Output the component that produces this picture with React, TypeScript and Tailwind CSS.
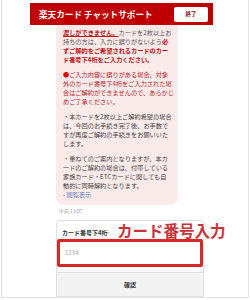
import React from "react";

const R = "text-[#c20d14]";

export default function App() {
  const font = { fontFamily: '"Noto Sans CJK JP", "Noto Sans", sans-serif' };
  return (
    <div className="w-[250px] h-[300px] bg-white relative overflow-hidden" style={font}>
      <div className="mx-[1px] h-[298px] border-x border-b border-[#e2e2e2] flex flex-col">
        <div className="pt-[3px] pl-[28px]">
          <div className="w-[183px] h-[22px] bg-[#bf0000] flex items-center justify-between pl-[9px] pr-[5px]">
            <span className="text-white font-bold text-[8.6px] leading-none whitespace-nowrap">楽天カード チャットサポート</span>
            <div className="w-[34px] h-[15px] bg-white rounded-[2px] flex items-center justify-center text-[5.5px] font-bold text-[#8a1a1a]">終了</div>
          </div>
        </div>
        <div className="ml-[54px] w-[122px] bg-[#fbeaea] rounded-b-[8px] pl-[7px] pr-[3px] pt-[2.5px] pb-[6px] text-[6.2px] leading-[9px] text-[#555] whitespace-nowrap">
          <div>
            <span className={`${R} font-bold underline`}>渡しができません。</span>
            <span>カードを2枚以上お</span>
          </div>
          <div>
            持ちの方は、入力に誤りがないよう<span className={`${R} font-bold`}>必</span>
          </div>
          <div className={`${R} font-bold`}>ずご解約をご希望されるカードのカー</div>
          <div className={`${R} font-bold`}>ド番号下4桁をご入力ください。</div>
          <div className="mt-[6px] text-[#b8242a]">
            <div><span className="text-[#e00000]">●</span>ご入力内容に誤りがある場合、対象</div>
            <div>外のカード番号下4桁をご入力された場</div>
            <div>合はご解約ができませんので、あらかじ</div>
            <div>めご了承ください。</div>
          </div>
          <div className="mt-[6px] text-[#444]">
            <div>・本カードを2枚以上ご解約希望の場合</div>
            <div>は、今回のお手続き完了後、お手数で</div>
            <div>すが再度ご解約の手続きをお願いいた</div>
            <div>します。</div>
          </div>
          <div className="mt-[6px] text-[#444]">
            <div>・重ねてのご案内となりますが、本カ</div>
            <div>ードのご解約の場合は、付帯している</div>
            <div>家族カード・ETCカードに関しても自</div>
            <div>動的に同時解約となります。</div>
          </div>
          <div className="text-[#5b7fb5]">- 閲覧表示</div>
        </div>
        <div className="ml-[57px] mt-[2px] text-[5px] leading-[8px] text-[#999]">午前 11:07</div>
        <div className="relative ml-[54px] mt-[5px] w-[148px] flex-1 border border-[#e0e0e0] rounded-t-[3px] bg-white flex flex-col">
          <div className="pl-[5px] pt-[8px] text-[6px] leading-[8px] font-bold text-[#333]">
            カード番号下4桁<span className="text-[#999] text-[4px] align-top">*</span>
          </div>
          <div className="mt-[2px] h-[28px] border-[3px] border-[#d42a2a] rounded-[2px] bg-white flex items-center pl-[5px] text-[6px] text-[#aaa]">
            1234
          </div>
          <div className="mt-[5px] flex-1 bg-[#f3f3f3] border-t border-[#e2e2e2] flex items-center justify-center text-[6px] font-bold text-[#333]">
            確認
          </div>
          <div className="absolute left-[60px] top-[2px] text-[15.5px] leading-none font-bold text-[#c8343b] whitespace-nowrap">
            カード番号入力
          </div>
        </div>
      </div>
    </div>
  );
}
